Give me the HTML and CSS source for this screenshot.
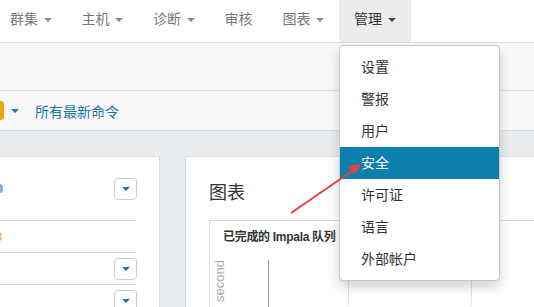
FILE: index.html
```html
<!DOCTYPE html>
<html>
<head>
    <meta charset="UTF-8">
    <meta name="viewport" content="width=device-width, initial-scale=1.0">
    <title>管理</title>
    <link rel="stylesheet" href="styles.css">
</head>
<body>
    <header class="navbar">
        <ul class="nav">
            <li><a href="#">群集<b class="caret"></b></a></li>
            <li><a href="#">主机<b class="caret"></b></a></li>
            <li><a href="#">诊断<b class="caret"></b></a></li>
            <li><a href="#">审核</a></li>
            <li><a href="#">图表<b class="caret"></b></a></li>
            <li class="open"><a href="#">管理<b class="caret"></b></a></li>
        </ul>
    </header>

    <div class="subbar"></div>

    <div class="cmdbar">
        <span class="badge"></span>
        <b class="caret blue"></b>
        <a href="#" class="cmd-link">所有最新命令</a>
    </div>

    <div class="main">
        <div class="card status-card">
            <div class="status-row tall">
                <span class="dot-text"></span>
                <button class="mini-btn"><b class="caret blue"></b></button>
            </div>
            <div class="status-row">
                <span class="warn-text">3</span>
            </div>
            <div class="status-row">
                <button class="mini-btn"><b class="caret blue"></b></button>
            </div>
            <div class="status-row">
                <button class="mini-btn"><b class="caret blue"></b></button>
            </div>
        </div>

        <div class="card chart-card">
            <h2>图表</h2>
            <div class="chart-box">
                <div class="chart-title">已完成的 Impala 队列</div>
                <div class="chart-body">
                    <div class="y-label">second</div>
                    <div class="plot">
                        <div class="col" style="width: 79px"></div>
                        <div class="col" style="width: 122px"></div>
                        <div class="col" style="width: 122px"></div>
                    </div>
                </div>
            </div>
        </div>
    </div>

    <ul class="dropdown-menu">
        <li><a href="#">设置</a></li>
        <li><a href="#">警报</a></li>
        <li><a href="#">用户</a></li>
        <li class="active"><a href="#">安全</a></li>
        <li><a href="#">许可证</a></li>
        <li><a href="#">语言</a></li>
        <li><a href="#">外部帐户</a></li>
    </ul>

    <!-- annotation arrow -->
    <svg class="arrow" width="534" height="307" viewBox="0 0 534 307">
        <line x1="291" y1="213" x2="355" y2="169" stroke="#e8403a" stroke-width="2"/>
        <polygon points="362,164 348,166 354,174" fill="#e8403a"/>
    </svg>
</body>
</html>
```

FILE: styles.css
```css
body {
    margin: 0;
    font-family: 'Liberation Sans', 'Noto Sans CJK SC', sans-serif;
    font-size: 14px;
    color: #333;
    background-color: #eaedf0;
    overflow: hidden;
    height: 307px;
}
a {
    text-decoration: none;
}
.navbar {
    height: 42px;
    background-color: #fff;
    border-bottom: 1px solid #ddd;
}
.nav {
    display: flex;
    margin: 0 0 0 -5px;
    padding: 0;
    list-style: none;
}
.nav li a {
    display: block;
    padding: 9px 15px 13px;
    line-height: 20px;
    color: #777;
}
.nav li.open a {
    background-color: #eeeded;
    color: #333;
}
.caret {
    display: inline-block;
    width: 0;
    height: 0;
    margin-left: 5.5px;
    vertical-align: middle;
    border-top: 4px solid #888;
    border-left: 4px solid transparent;
    border-right: 4px solid transparent;
}
.nav li.open .caret {
    border-top-color: #444;
}
.caret.blue {
    border-top-color: #1a77a8;
    margin-left: 0;
}
.subbar {
    height: 47px;
    background-color: #f8f8f8;
    border-bottom: 1px solid #ddd;
}
.cmdbar {
    height: 39px;
    display: flex;
    align-items: center;
    background-color: #f8f8f8;
    border-bottom: 1px solid #ddd;
}
.badge {
    width: 18px;
    height: 19px;
    margin-left: -14px;
    border-radius: 3px;
    background-color: #f0a30a;
}
.cmdbar .caret {
    margin-left: 7px;
}
.cmd-link {
    margin-left: 16px;
    color: #1a77a8;
}
.main {
    display: flex;
    gap: 25px;
    padding-top: 25px;
}
.card {
    background-color: #fff;
    border: 1px solid #ddd;
    height: 200px;
    flex-shrink: 0;
}
.status-card {
    width: 180px;
    margin-left: -22px;
}
.status-row {
    height: 31px;
    margin-right: 22px;
    border-bottom: 1px solid #ddd;
    display: flex;
    align-items: center;
    justify-content: space-between;
}
.status-row.tall {
    height: 63px;
}
.dot-text {
    width: 24px;
    height: 9px;
    background-color: #8ab4d8;
    border-radius: 3px;
}
.warn-text {
    color: #f0a30a;
    margin-left: 16px;
    font-size: 13px;
}
.status-row:nth-child(3),
.status-row:nth-child(4) {
    justify-content: flex-end;
}
.mini-btn {
    width: 23px;
    height: 22px;
    padding: 0;
    background-color: #fff;
    border: 1px solid #ccc;
    border-radius: 4px;
    display: flex;
    align-items: center;
    justify-content: center;
}
.chart-card {
    width: 380px;
    padding-left: 23px;
}
.chart-card h2 {
    margin: 24px 0 0;
    font-size: 18px;
    font-weight: normal;
    line-height: 24px;
    color: #333;
}
.chart-box {
    margin-top: 15px;
    border: 1px solid #ddd;
    border-right: none;
    height: 120px;
}
.chart-title {
    padding: 8px 0 0 13px;
    font-size: 12px;
    font-weight: bold;
    letter-spacing: -0.3px;
    line-height: 16px;
}
.chart-body {
    display: flex;
    align-items: flex-start;
    margin-top: 15px;
}
.y-label {
    writing-mode: vertical-rl;
    transform: rotate(180deg);
    font-size: 13px;
    line-height: 14px;
    color: #aaa;
    margin-left: 3px;
}
.plot {
    display: flex;
    margin-left: 41px;
    height: 60px;
    border-left: 1px solid #999;
}
.col {
    border-right: 1px dotted #ccc;
}
.dropdown-menu {
    position: absolute;
    left: 339px;
    top: 45px;
    width: 159px;
    margin: 0;
    padding: 5px 0;
    list-style: none;
    background-color: #fff;
    border: 1px solid #c8c8c8;
    border-radius: 4px;
    box-shadow: 0 6px 12px rgba(0, 0, 0, 0.175);
}
.dropdown-menu li a {
    display: block;
    height: 32px;
    line-height: 32px;
    padding: 0 21px;
    color: #333;
}
.dropdown-menu li.active a {
    background-color: #0c7fac;
    color: #fff;
}
.arrow {
    position: absolute;
    left: 0;
    top: 0;
    pointer-events: none;
}
```
